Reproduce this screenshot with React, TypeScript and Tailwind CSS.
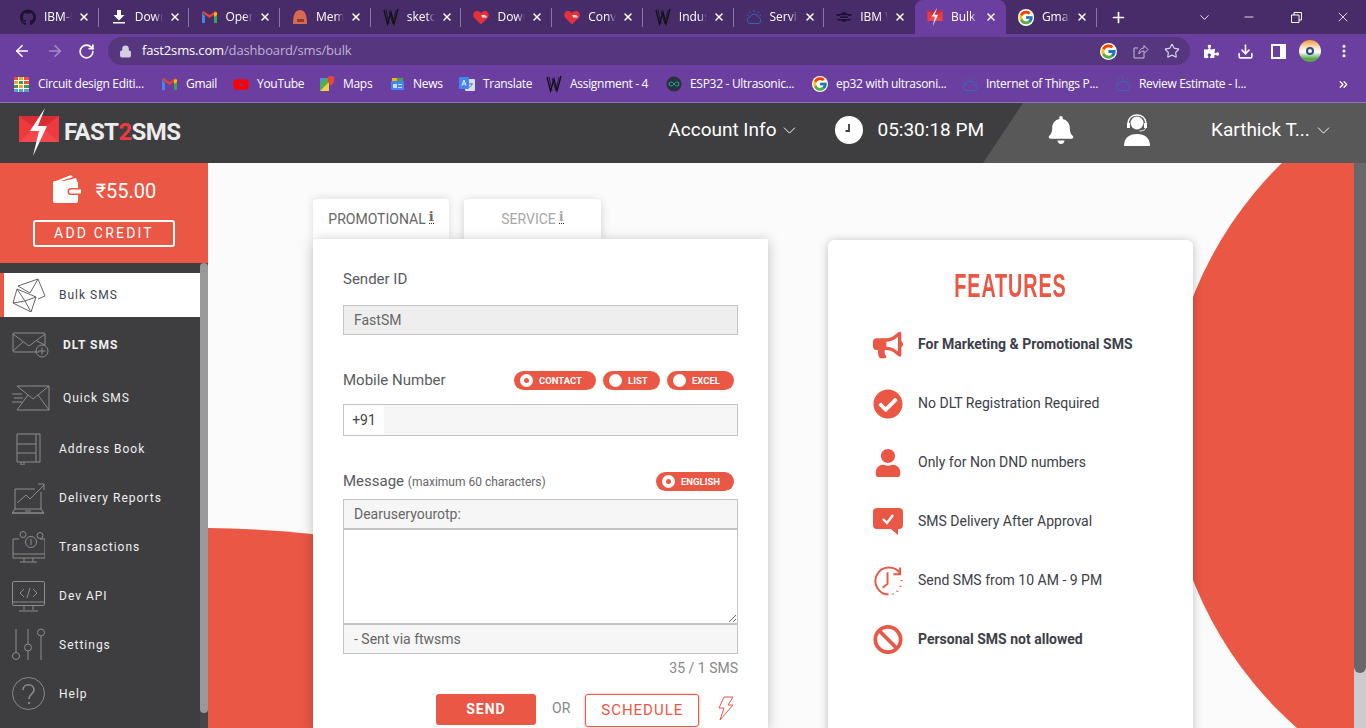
/**
 * Fast2SMS bulk SMS page inside a Chrome window.
 */
import type { ReactNode } from 'react';
import { ArrowLeft, ArrowRight, RotateCw, Lock, Star, Download, Minus, X, Plus, ChevronDown, MoreVertical, ChevronsRight } from 'lucide-react';
import { FaBullhorn, FaCheckCircle, FaUser, FaBan, FaGithub, FaPuzzlePiece, FaYoutube, FaBell } from 'react-icons/fa';
import { FcGoogle } from 'react-icons/fc';

function GmailIcon() {
  return (
    <svg width="15" height="12" viewBox="0 0 15 12">
      <path d="M0 1.5V12h3V5z" fill="#4285f4" />
      <path d="M12 5v7h3V1.5z" fill="#34a853" />
      <path d="M0 1.5 7.5 7 15 1.5 13.5 0 7.5 4 1.5 0z" fill="#ea4335" />
      <path d="M12 1.5 15 1.5V4L12 6z" fill="#fbbc04" />
    </svg>
  );
}

function WIcon() {
  return (
    <svg width="16" height="18" viewBox="0 0 16 18" fill="none" stroke="#111" strokeWidth="1.3">
      <path d="M1 2 4.5 16 8 4l3 12L15 1" />
      <path d="M3 1.5 6 16M6 3l4 13M13 2l-2.5 11" strokeWidth=".8" />
    </svg>
  );
}

function HeartIcon() {
  return (
    <svg width="16" height="15" viewBox="0 0 16 15">
      <path d="M8 14.5 1 7.5C-1 4.5 1 1 4 1c1.7 0 3 .8 4 2.2C9 1.8 10.3 1 12 1c3 0 5 3.5 3 6.5z" fill="#e5303c" />
      <path d="M8.5 5H12l2.5 2.5H9z" fill="#fff" opacity=".85" />
    </svg>
  );
}

function CloudIcon({ size = 16 }: { size?: number }) {
  return (
    <svg width={size} height={size} viewBox="0 0 16 16" fill="none" stroke="#2a6fc4" strokeWidth=".9">
      <path d="M4 14.5h8a3 3 0 0 0 .6-5.9A4.5 4.5 0 0 0 4 8a3.3 3.3 0 0 0 0 6.5z" />
      <path d="M8 .8v2M3.2 2.5l1.1 1.7M12.8 2.5l-1.1 1.7M1 6l1.5.8M15 6l-1.5.8" />
    </svg>
  );
}

function BeeIcon() {
  return (
    <svg width="16" height="12" viewBox="0 0 16 12" fill="#1b1330">
      <ellipse cx="8" cy="6" rx="4" ry="5" />
      <path d="M0 3h5v2H1zM16 3h-5v2h4zM1 8h4v1.5H2zM15 8h-4v1.5h3z" />
      <path d="M4 4.5h8v.8H4zM4 7h8v.8H4z" fill="#6b3fa0" />
    </svg>
  );
}

function LogoMark({ small = false }: { small?: boolean }) {
  return (
    <svg width={small ? 16 : 42} height={small ? 20 : 50} viewBox="0 0 42 50">
      <rect x="1" y="9" width="40" height="26" fill="#ee3a3f" />
      <path d="M1 9 21 24 41 9z" fill="#d92c33" />
      <path d="M1 35 17 21l4 3 4-3 16 14z" fill="#f5484c" />
      <path d="M27 1 12 24h9L15 49l14-30h-9z" fill="#fff" />
    </svg>
  );
}

function TinkerIcon() {
  const colors = ['#e8503a', '#f4a623', '#e8503a', '#f4a623', '#3e9a4c', '#e8503a', '#3e9a4c', '#f4a623', '#3e9a4c', '#4ea3dc', '#4ea3dc', '#4ea3dc'];
  return (
    <div className="grid h-[15px] w-[15px] grid-cols-3 grid-rows-4 gap-[1px] bg-white">
      {colors.map((c, i) => (
        <span key={i} style={{ backgroundColor: c }} />
      ))}
    </div>
  );
}

function MapsIcon() {
  return (
    <svg width="16" height="16" viewBox="0 0 16 16">
      <path d="M1 2h9v13H1z" fill="#4caf50" />
      <path d="M1 15 10 6v9z" fill="#f7d046" />
      <path d="M1 2h5L1 7z" fill="#4a8af4" />
      <path d="M12 0a3.5 3.5 0 0 0-3.5 3.5C8.5 6 12 10 12 10s3.5-4 3.5-6.5A3.5 3.5 0 0 0 12 0z" fill="#e8453c" />
    </svg>
  );
}

function NewsIcon() {
  return (
    <svg width="15" height="14" viewBox="0 0 15 14">
      <path d="M2 1h11v4H2z" fill="#3fa45b" />
      <path d="M2 1h5v4H2z" fill="#f4b400" />
      <rect x="1" y="4" width="13" height="9" rx="1" fill="#4285f4" />
      <rect x="3" y="7" width="4" height="4" fill="#cfe0fb" />
      <rect x="8" y="7" width="4" height="1" fill="#cfe0fb" />
      <rect x="8" y="10" width="4" height="1" fill="#cfe0fb" />
    </svg>
  );
}

function TranslateIcon() {
  return (
    <svg width="16" height="16" viewBox="0 0 16 16">
      <rect x="6" y="3" width="10" height="12" rx="1" fill="#d9dfe8" />
      <rect x="0" y="1" width="10" height="12" rx="1" fill="#4285f4" />
      <path d="M3 9.5 5 4l2 5.5M3.800 8h2.500" stroke="#fff" strokeWidth=".9" fill="none" />
      <path d="M10 8h4M12 7v1M13 8c-.3 2-2 3-3 3.5" stroke="#667" strokeWidth=".8" fill="none" />
    </svg>
  );
}

function ArduinoIcon() {
  return (
    <svg width="16" height="16" viewBox="0 0 16 16" fill="none">
      <circle cx="8" cy="8" r="7.5" fill="#28323a" />
      <path d="M8 8c-1-1.5-2-2-3-2a2 2 0 0 0 0 4c1 0 2-.5 3-2s2-2 3-2a2 2 0 0 1 0 4c-1 0-2-.5-3-2z" stroke="#27a9a2" strokeWidth="1" />
    </svg>
  );
}

const TABS: { title: string; icon: ReactNode; active?: boolean }[] = [
  { title: 'IBM-Project', icon: <FaGithub size={17} color="#1c1330" /> },
  {
    title: 'Downloads',
    icon: (
      <svg width="12" height="14" viewBox="0 0 12 14" fill="#fff">
        <path d="M4 0h4v5h3.500L6 10.500.5 5H4zM0 12h12v1.600H0z" />
      </svg>
    ),
  },
  { title: 'Open Inbox', icon: <GmailIcon /> },
  {
    title: 'Member',
    icon: (
      <svg width="16" height="16" viewBox="0 0 16 16">
        <path d="M1 15C1 6 3 1 8 1s7 5 7 14z" fill="#d86a50" />
        <rect x="5" y="10" width="7" height="3" fill="#8c3c2c" />
      </svg>
    ),
  },
  { title: 'sketch.ino', icon: <WIcon /> },
  { title: 'Download', icon: <HeartIcon /> },
  { title: 'Convert', icon: <HeartIcon /> },
  { title: 'Industry', icon: <WIcon /> },
  { title: 'Services', icon: <CloudIcon /> },
  { title: 'IBM Watson', icon: <BeeIcon /> },
  { title: 'Bulk SMS', icon: <LogoMark small />, active: true },
  { title: 'Gmail', icon: <FcGoogle size={17} className="rounded-full bg-white" /> },
];

function TabStrip() {
  return (
    <div className="flex h-[34px] bg-[#472c69] pl-[8px] text-white">
      {TABS.map((tab, i) => {
        const noDivider = tab.active || i === 9;
        return (
          <div
            key={i}
            className={
              tab.active
                ? 'relative flex h-[34px] w-[91px] items-center rounded-t-[8px] bg-[#6b3fa0] pl-[12px]'
                : 'relative flex h-[34px] w-[90.7px] items-center pl-[12px]'
            }
          >
            <span className="flex w-[16px] shrink-0 items-center justify-center">{tab.icon}</span>
            <span className="ml-[8px] w-[28px] overflow-hidden whitespace-nowrap font-['Open_Sans',sans-serif] text-[12px] [mask-image:linear-gradient(90deg,#000_70%,transparent)]">
              {tab.title}
            </span>
            <X size={12} strokeWidth={3} className="ml-[6px] shrink-0" />
            {!noDivider && <span className="absolute top-[8px] right-0 h-[19px] w-px bg-[#8a78a4]" />}
          </div>
        );
      })}
      <div className="flex w-[44px] items-center justify-center">
        <Plus size={17} strokeWidth={2.4} />
      </div>
      <div className="ml-auto flex items-center">
        <ChevronDown size={15} strokeWidth={1.4} className="mr-[30px]" />
        <Minus size={14} strokeWidth={1.4} className="mr-[35px]" />
        <svg width="11" height="11" viewBox="0 0 11 11" fill="none" stroke="#fff" className="mr-[33px]">
          <path d="M.5 3H8v7.5H.5zM3 3V.5h7.5V8H8" />
        </svg>
        <X size={16} strokeWidth={1.2} className="mr-[15px]" />
      </div>
    </div>
  );
}

function Toolbar() {
  return (
    <div className="flex h-[34px] items-center bg-[#6b3fa0] text-white">
      <ArrowLeft size={18} strokeWidth={2.2} className="ml-[13px]" />
      <ArrowRight size={18} strokeWidth={2.2} className="ml-[15px] text-[#a78cc9]" />
      <RotateCw size={17} strokeWidth={2.4} className="ml-[14px]" />
      <div className="ml-[13px] flex h-[28px] w-[1082px] items-center rounded-full bg-[#55367f] pl-[11px]">
        <Lock size={13} fill="#d5cde0" strokeWidth={2} className="text-[#d5cde0]" />
        <span className="ml-[10px] font-['Open_Sans',sans-serif] text-[13px] tracking-[-.15px] text-white">
          fast2sms.com<span className="text-[#c0b2d4]">/dashboard/sms/bulk</span>
        </span>
        <div className="ml-auto flex items-center">
          <FcGoogle size={17} className="rounded-full bg-white" />
          <svg width="16" height="15" viewBox="0 0 16 15" fill="none" stroke="#c8bdd8" className="ml-[16px]">
            <path d="M11 10v4H1V4h4M6 10c0-4 2-6 5-6V1.500l4 4-4 4V7c-2 0-4 1-5 3z" />
          </svg>
          <Star size={16} strokeWidth={1.8} className="mr-[10px] ml-[15px] text-[#d8d0e4]" />
        </div>
      </div>
      <FaPuzzlePiece size={15} className="ml-[14px]" />
      <Download size={17} strokeWidth={2.2} className="ml-[18px]" />
      <svg width="15" height="15" viewBox="0 0 15 15" className="ml-[17px]">
        <path d="M0 0h15v15H0zM2 2v11h7V2z" fill="#fff" fillRule="evenodd" />
      </svg>
      <div className="ml-[13px] h-[22px] w-[22px] rounded-full bg-[linear-gradient(#f39a3a_0,#f7e6c8_35%,#fff_55%,#5aa84f_85%)] p-[7px]">
        <div className="h-full w-full rounded-full border-2 border-[#2c4a8c]" />
      </div>
      <MoreVertical size={16} strokeWidth={2.6} className="ml-[15px]" />
    </div>
  );
}

const BOOKMARKS: { label: string; icon: ReactNode; w: string; gap: string }[] = [
  { label: 'Circuit design Editi...', icon: <TinkerIcon />, w: 'w-[107px]', gap: 'ml-[9px]' },
  { label: 'Gmail', icon: <GmailIcon />, w: 'w-[31px]', gap: 'ml-[9px]' },
  { label: 'YouTube', icon: <FaYoutube size={17} color="#f00" />, w: 'w-[46px]', gap: 'ml-[8px]' },
  { label: 'Maps', icon: <MapsIcon />, w: 'w-[30px]', gap: 'ml-[8px]' },
  { label: 'News', icon: <NewsIcon />, w: 'w-[30px]', gap: 'ml-[8px]' },
  { label: 'Translate', icon: <TranslateIcon />, w: 'w-[47px]', gap: 'ml-[8px]' },
  { label: 'Assignment - 4', icon: <WIcon />, w: 'w-[80px]', gap: 'ml-[8px]' },
  { label: 'ESP32 - Ultrasonic...', icon: <ArduinoIcon />, w: 'w-[106px]', gap: 'ml-[8px]' },
  { label: 'ep32 with ultrasoni...', icon: <FcGoogle size={16} className="rounded-full bg-white" />, w: 'w-[110px]', gap: 'ml-[8px]' },
  { label: 'Internet of Things P...', icon: <CloudIcon />, w: 'w-[113px]', gap: 'ml-[8px]' },
  { label: 'Review Estimate - I...', icon: <CloudIcon />, w: 'w-[109px]', gap: 'ml-[8px]' },
];

function Bookmarks() {
  return (
    <div className="flex h-[35px] items-center gap-[16px] border-b border-[#9271bd] bg-[#6b3fa0] pb-[2px] pl-[13px] text-white">
      {BOOKMARKS.map(b => (
        <div key={b.label} className="flex items-center">
          <span className="flex w-[16px] items-center justify-center">{b.icon}</span>
          <span className={`${b.gap} ${b.w} font-['Open_Sans',sans-serif] text-[12px] tracking-[-.3px] whitespace-nowrap`}>{b.label}</span>
        </div>
      ))}
      <ChevronsRight size={13} strokeWidth={2.5} className="ml-[73px]" />
    </div>
  );
}

function SiteHeader() {
  return (
    <header className="relative flex h-[60px] items-center bg-[#3e3e40] pb-[6px] font-['Roboto',sans-serif] text-white">
      <div className="absolute top-0 right-0 h-[60px] w-[383px] bg-[#585858] [clip-path:polygon(40px_0,100%_0,100%_100%,0_100%)]" />
      <div className="relative mt-[4px] ml-[18px] flex items-center">
        <LogoMark />
        <span className="ml-[4px] text-[24px] font-bold tracking-[-.6px] text-[#ececec]">
          FAST<span className="text-[#ee3a3f]">2</span>SMS
        </span>
      </div>
      <div className="relative ml-[488px] flex items-center text-[19px]">
        <span>Account Info</span>
        <ChevronDown size={21} strokeWidth={1.1} className="ml-[3px]" />
      </div>
      <div className="relative ml-[35px] flex h-[28px] w-[28px] items-center justify-center rounded-full bg-white">
        <svg width="14" height="14" viewBox="0 0 14 14" fill="none" stroke="#3e3e40" strokeWidth="1.8">
          <path d="M7 1v7H3.5" />
        </svg>
      </div>
      <span className="relative ml-[14px] text-[19px]">05:30:18 PM</span>
      <FaBell size={28} className="relative ml-[63px]" />
      <svg width="28" height="32" viewBox="0 0 28 32" className="relative ml-[48px]" fill="none">
        <circle cx="14" cy="9" r="6.5" fill="#fff" />
        <path d="M5 10C5 4 9 1 14 1s9 3 9 9" stroke="#fff" strokeWidth="1.3" />
        <path d="M4 9h3v5H4zM21 9h3v5h-3z" fill="#fff" />
        <path d="M22.5 14c0 2-3 3-6 3" stroke="#fff" />
        <path d="M1 32c0-8 5-12 13-12s13 4 13 12z" fill="#fff" />
      </svg>
      <span className="relative ml-[60px] text-[19px]">Karthick T...</span>
      <ChevronDown size={21} strokeWidth={1.1} className="relative ml-[3px]" />
    </header>
  );
}

const NAV: { label: string; row: string; indent?: boolean; icon: ReactNode; active?: boolean; bold?: boolean }[] = [
  {
    label: 'Bulk SMS',
    row: 'h-[44px]',
    active: true,
    icon: (
      <svg width="34" height="34" viewBox="0 0 34 34" fill="none" stroke="#666" strokeWidth="1">
        <path d="M6 8 26 1l7 17-7 3M6 8l12 7 8-14" />
        <path d="M5 11 24 19l-5 15L1 25zM5 11l8 12 11-4M1 25l12-2 6 11" />
      </svg>
    ),
  },
  {
    label: 'DLT SMS',
    row: 'h-[55px]',
    indent: true,
    bold: true,
    icon: (
      <svg width="38" height="26" viewBox="0 0 38 26" fill="none" stroke="#8c8c8c" strokeWidth="1">
        <path d="M27 20H2a1 1 0 0 1-1-1V2a1 1 0 0 1 1-1h30a1 1 0 0 1 1 1v11" />
        <path d="M1 2l16 12L33 2M1 19l10-9M33 13l-8-4" />
        <circle cx="30" cy="19" r="6" />
        <path d="M30 15.5v7M26.5 19h7" />
      </svg>
    ),
  },
  {
    label: 'Quick SMS',
    row: 'h-[51px]',
    indent: true,
    icon: (
      <svg width="38" height="26" viewBox="0 0 38 26" fill="none" stroke="#8c8c8c" strokeWidth="1">
        <path d="M5 1h32v24H5M5 1l16 13L37 1M5 25l11-15M37 25 26 10" />
        <path d="M0 9h10M2 13h9M0 17h10" />
      </svg>
    ),
  },
  {
    label: 'Address Book',
    row: 'h-[52px]',
    icon: (
      <svg width="30" height="32" viewBox="0 0 30 32" fill="none" stroke="#8c8c8c" strokeWidth="1">
        <path d="M5 1h23v28H5zM5 11h19M5 20h19M24 1v28M9 29v3h3v-3" />
      </svg>
    ),
  },
  {
    label: 'Delivery Reports',
    row: 'h-[46px]',
    icon: (
      <svg width="33" height="31" viewBox="0 0 33 31" fill="none" stroke="#8c8c8c" strokeWidth="1">
        <path d="M29 9v17M3 26V6h20M0 30l3-4h26l3 4zM0 30h32" />
        <path d="M5 20l9-8 4 4L32 2M26 1h6v6M13 28h6" />
      </svg>
    ),
  },
  {
    label: 'Transactions',
    row: 'h-[51px]',
    icon: (
      <svg width="33" height="32" viewBox="0 0 33 32" fill="none" stroke="#8c8c8c" strokeWidth="1">
        <path d="M7 8H1v19h32V8h-5M1 23h32M12 27v4M21 27v4M8 31h17" />
        <circle cx="11" cy="3.5" r="3" />
        <circle cx="28" cy="4.5" r="3" />
        <circle cx="19" cy="11" r="5.5" />
        <path d="M19 8v6" />
      </svg>
    ),
  },
  {
    label: 'Dev API',
    row: 'h-[48px]',
    icon: (
      <svg width="33" height="31" viewBox="0 0 33 31" fill="none" stroke="#8c8c8c" strokeWidth="1">
        <rect x=".5" y=".5" width="32" height="24" rx="1.5" />
        <path d="M.5 21h32M12 25v4M21 25v4M7 30h19M12 8l-4 4 4 4M21 8l4 4-4 4M18 7l-3 10" />
      </svg>
    ),
  },
  {
    label: 'Settings',
    row: 'h-[49px]',
    icon: (
      <svg width="33" height="33" viewBox="0 0 33 33" fill="none" stroke="#8c8c8c" strokeWidth="1">
        <path d="M4 1v23M16 1v15M16 23v9M29 8v24" />
        <circle cx="4" cy="28" r="3.5" />
        <circle cx="16" cy="19.5" r="3.5" />
        <circle cx="29" cy="4.5" r="3.5" />
      </svg>
    ),
  },
  {
    label: 'Help',
    row: 'h-[49px]',
    icon: (
      <svg width="33" height="33" viewBox="0 0 33 33" fill="none" stroke="#8c8c8c" strokeWidth="1">
        <circle cx="16.5" cy="16.5" r="16" />
        <path d="M11 13c0-7 11-7 11 0 0 4-5 4-5 9" strokeWidth="1.6" />
        <circle cx="17" cy="26" r=".8" fill="#8c8c8c" />
      </svg>
    ),
  },
];

function Sidebar() {
  return (
    <aside className="flex w-[208px] shrink-0 flex-col font-['Roboto',sans-serif]">
      <div className="flex h-[100px] flex-col items-center bg-[#ea5744] pt-[11px] text-white">
        <div className="flex h-[30px] items-center">
          <svg width="30" height="30" viewBox="0 0 30 30" fill="#fff">
            <path d="M4 7 19 1l2 2L9 7zM12 7l12-3 1 3z" />
            <path d="M1 9a2 2 0 0 1 2-2h21a2 2 0 0 1 2 2v5h-7a3.5 3.5 0 0 0 0 7h7v6a2 2 0 0 1-2 2H3a2 2 0 0 1-2-2z" />
            <path d="M19 15.5h10v4H19a2 2 0 0 1 0-4z" />
          </svg>
          <span className="ml-[14px] pt-[4px] text-[20px] leading-none">₹55.00</span>
        </div>
        <button className="mt-[16px] flex h-[27px] w-[142px] items-center justify-center rounded-[3px] border-2 border-white text-[14px] tracking-[2.2px]">
          ADD CREDIT
        </button>
      </div>
      <div className="flex h-[465px] bg-[#3e3e40]">
        <nav className="w-[200px] pt-[10px]">
          {NAV.map(item => (
            <div
              key={item.label}
              className={`${item.row} flex items-center ${item.active ? 'border-l-4 border-[#ea5744] bg-white pl-[8px] text-[#3e4450]' : 'pl-[12px] text-[#f0f0f0]'}`}
            >
              <span className="flex w-[47px] shrink-0 items-center">{item.icon}</span>
              <span className={`text-[12px] tracking-[1px] ${item.bold ? 'font-bold' : ''} ${item.indent ? 'ml-[4px]' : ''}`}>{item.label}</span>
            </div>
          ))}
        </nav>
        <div className="w-[8px] bg-[#47474a]">
          <div className="h-[450px] rounded-full bg-[#9a9a9a]" />
        </div>
      </div>
    </aside>
  );
}

function Pill({ label, checked, w }: { label: string; checked?: boolean; w: string }) {
  return (
    <span className={`${w} flex h-[19px] items-center rounded-full bg-[#ea5744] pl-[6px] text-[9.5px] font-bold text-white`}>
      <span className="mr-[6px] flex h-[13px] w-[13px] items-center justify-center rounded-full bg-white">
        {checked && <span className="h-[5px] w-[5px] rounded-full bg-[#ea5744]" />}
      </span>
      <span className="pt-[2px]">{label}</span>
    </span>
  );
}

function InfoMark() {
  return (
    <span className="ml-[3px] inline-block h-[15px] border-b border-dotted border-[#222] font-['DejaVu_Serif',serif] text-[13px] leading-[15px] font-bold">
      i
    </span>
  );
}

function ComposeCard() {
  return (
    <div className="mt-[36px] ml-[105px] w-[455px] shrink-0">
      <div className="relative z-10 flex h-[40px] items-stretch text-[14px]">
        <div className="flex w-[136px] items-start justify-center rounded-t-[4px] bg-white pt-[10px] text-[#666] shadow-[0_-1px_8px_rgba(0,0,0,.12)]">
          PROMOTIONAL
          <InfoMark />
        </div>
        <div className="ml-[15px] flex w-[137px] items-start justify-center rounded-t-[4px] bg-white pt-[10px] text-[#a8a8a8] shadow-[0_2px_10px_rgba(0,0,0,.18)]">
          SERVICE
          <InfoMark />
        </div>
      </div>
      <div className="relative z-10 h-[489px] bg-white px-[30px] pt-[31px] text-[15px] text-[#595b60] shadow-[0_2px_12px_rgba(0,0,0,.25)]">
        <div className="h-[18px] leading-[18px]">Sender ID</div>
        <div className="mt-[17px] flex h-[30px] items-center border border-[#c4c4c4] bg-[#eeeeee] pl-[10px] text-[14px] text-[#666]">FastSM</div>

        <div className="mt-[35px] flex h-[20px] items-center justify-between pr-[4px]">
          <span>Mobile Number</span>
          <div className="flex gap-[7px]">
            <Pill label="CONTACT" checked w="w-[82px]" />
            <Pill label="LIST" w="w-[57px]" />
            <Pill label="EXCEL" w="w-[67px]" />
          </div>
        </div>
        <div className="mt-[14px] flex h-[32px] items-stretch border border-[#c4c4c4] bg-[#f6f6f6] text-[14px] text-[#444]">
          <span className="flex w-[40px] items-center justify-center bg-white">+91</span>
        </div>

        <div className="mt-[35px] flex h-[20px] items-center justify-between pr-[4px]">
          <span>
            Message <span className="text-[12px] text-[#666]">(maximum 60 characters)</span>
          </span>
          <Pill label="ENGLISH" checked w="w-[78px]" />
        </div>
        <div className="mt-[8px] flex h-[30px] items-center border border-[#c4c4c4] bg-[#f6f6f6] pl-[10px] text-[14px] text-[#666]">Dearuseryourotp:</div>
        <textarea className="block h-[95px] w-full resize-y border border-[#c4c4c4] bg-white" />
        <div className="flex h-[30px] items-center border border-[#c4c4c4] bg-[#f6f6f6] pl-[10px] text-[14px] text-[#666]">- Sent via ftwsms</div>
        <div className="mt-[6px] text-right text-[14px] leading-[16px] text-[#888]">35 / 1 SMS</div>
        <div className="mt-[18px] flex items-start">
          <button className="ml-[93px] h-[31px] w-[100px] rounded-[3px] bg-[#ea5744] text-[14px] font-bold tracking-[1px] text-white">SEND</button>
          <span className="ml-[16px] pt-[6px] text-[14px] leading-[16px] text-[#888]">OR</span>
          <button className="ml-[15px] h-[33px] w-[114px] rounded-[3px] border border-[#ea5744] text-[15px] tracking-[1px] text-[#ea5744] shadow-[0_0_3px_rgba(234,87,68,.5)]">SCHEDULE</button>
          <svg width="16" height="25" viewBox="0 0 16 25" fill="none" stroke="#ea5744" strokeWidth="1" className="mt-[2px] ml-[19px]">
            <path d="M6 1h9l-5 8h5L2 24l4-12H1z" />
          </svg>
        </div>
      </div>
    </div>
  );
}

const FEATURES: { label: string; bold?: boolean; icon: ReactNode }[] = [
  { label: 'For Marketing & Promotional SMS', bold: true, icon: <FaBullhorn size={30} /> },
  { label: 'No DLT Registration Required', icon: <FaCheckCircle size={30} /> },
  { label: 'Only for Non DND numbers', icon: <FaUser size={28} /> },
  {
    label: 'SMS Delivery After Approval',
    icon: (
      <svg width="30" height="28" viewBox="0 0 30 28">
        <path d="M4 0h22a4 4 0 0 1 4 4v13a4 4 0 0 1-4 4h-1v6l-7-6H4a4 4 0 0 1-4-4V4a4 4 0 0 1 4-4z" fill="#ea5744" />
        <path d="M10 11l4 4 6-8" stroke="#fff" strokeWidth="2.4" fill="none" />
      </svg>
    ),
  },
  {
    label: 'Send SMS from 10 AM - 9 PM',
    icon: (
      <svg width="31" height="31" viewBox="0 0 31 31" fill="none" stroke="#ea5744" strokeWidth="2">
        <path d="M28 8A14 14 0 1 0 16 30" />
        <path d="M15 7v12l-5 4" />
        <path d="M28 2v7h-7" />
        <path d="M29.5 15v1M28.5 21v1M25 26v1M20.5 29v1" strokeWidth="2.2" />
      </svg>
    ),
  },
  { label: 'Personal SMS not allowed', bold: true, icon: <FaBan size={31} /> },
];

function FeaturesCard() {
  return (
    <div className="relative z-10 mt-[77px] ml-[60px] h-[500px] w-[365px] shrink-0 rounded-t-[6px] bg-white pt-[30px] shadow-[0_1px_10px_rgba(0,0,0,.25)]">
      <h2 className="scale-x-[.6] text-center font-['Liberation_Sans',sans-serif] text-[33px] leading-[32px] font-bold tracking-[1.5px] text-[#ea5744]">FEATURES</h2>
      <ul className="mt-[13px] pl-[45px]">
        {FEATURES.map(f => (
          <li key={f.label} className="flex h-[59px] items-center">
            <span className="flex w-[30px] justify-center text-[#ea5744]">{f.icon}</span>
            <span className={`ml-[15px] text-[14px] text-[#3c4048] ${f.bold ? 'font-bold' : ''}`}>{f.label}</span>
          </li>
        ))}
      </ul>
    </div>
  );
}

export default function App() {
  return (
    <div className="flex h-[728px] w-[1366px] flex-col overflow-hidden font-['Roboto',sans-serif]">
      <TabStrip />
      <Toolbar />
      <Bookmarks />
      <SiteHeader />
      <div className="flex h-[565px]">
        <Sidebar />
        <main className="relative flex flex-1 items-start overflow-hidden bg-[#fbfbfb]">
          {/* decorative circles behind the cards */}
          <div className="absolute top-[365px] left-[-568px] h-[600px] w-[1120px] rounded-[50%] bg-[#ea5744]" />
          <div className="absolute top-[-110px] left-[958px] h-[771px] w-[771px] rounded-full bg-[#ea5744]" />
          <ComposeCard />
          <FeaturesCard />
        </main>
        <div className="flex w-[12px] shrink-0 flex-col bg-[#cccccc]">
          <div className="h-[510px] rounded-b-[6px] bg-[#686868]" />
        </div>
      </div>
    </div>
  );
}
